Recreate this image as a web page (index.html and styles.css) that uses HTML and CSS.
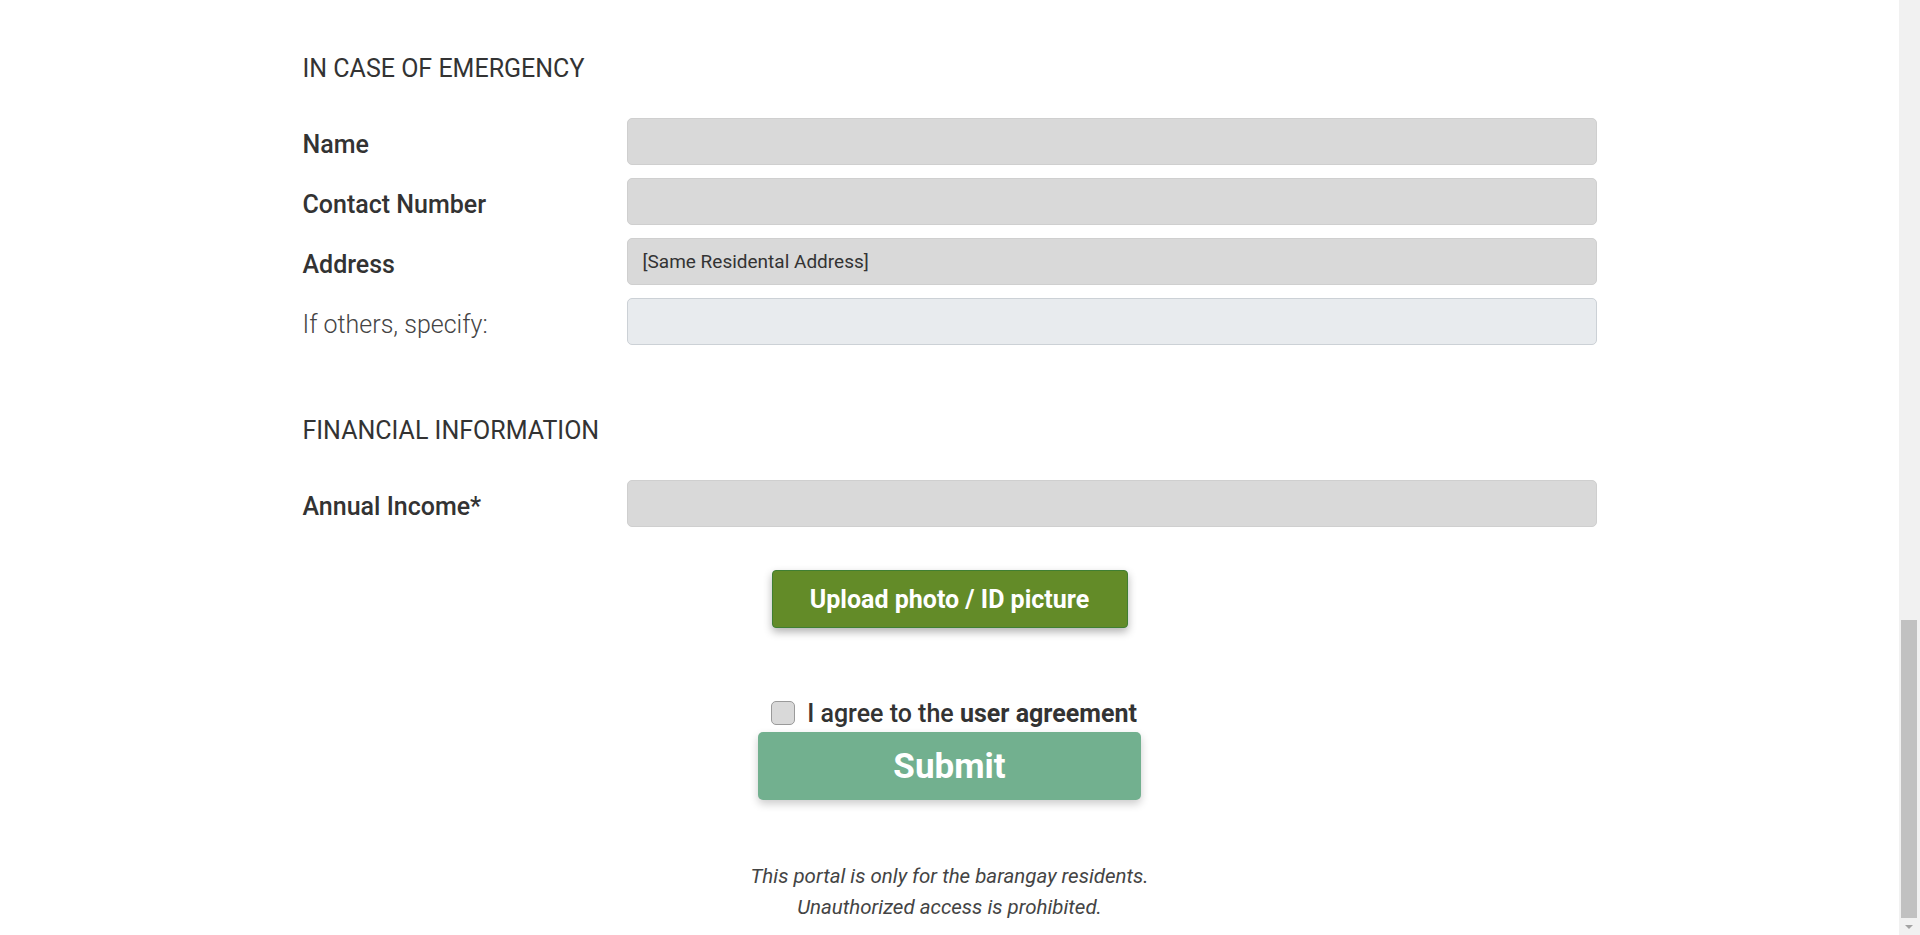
FILE: index.html
```html
<!DOCTYPE html>
<html lang="en">
<head>
  <meta charset="UTF-8">
  <meta name="viewport" content="width=device-width,initial-scale=1">
  <title>Barangay Portal - Registration</title>
  <link rel="stylesheet" href="styles.css">
</head>
<body>

  <div class="page">
    <main class="container">

      <!-- Contacto de emergencia -->
      <h2 class="section-title">IN CASE OF EMERGENCY</h2>
      <div class="form-grid">
        <label class="label">Name</label>
        <input class="field" type="text">

        <label class="label">Contact Number</label>
        <input class="field" type="text">

        <label class="label">Address</label>
        <input class="field" type="text" value="[Same Residental Address]">

        <label class="label light">If others, specify:</label>
        <input class="field disabled" type="text" disabled>
      </div>

      <!-- Finanzas -->
      <h2 class="section-title second">FINANCIAL INFORMATION</h2>
      <div class="form-grid">
        <label class="label">Annual Income*</label>
        <input class="field" type="text">
      </div>

      <div class="actions">
        <button class="btn-upload" type="button">Upload photo / ID picture</button>

        <label class="agree">
          <input type="checkbox" class="check">
          <span>I agree to the <b>user agreement</b></span>
        </label>
        <button class="btn-submit" type="submit">Submit</button>
      </div>

      <p class="note">This portal is only for the barangay residents.<br>Unauthorized access is prohibited.</p>
    </main>
  </div>

  <!-- barra de desplazamiento (página al final) -->
  <div class="scrollbar">
    <div class="thumb"></div>
    <div class="arrow"></div>
  </div>

</body>
</html>
```

FILE: styles.css
```css
*{margin:0;padding:0;box-sizing:border-box;}
html,body{
  height:100%;
  overflow:hidden;
  font-family:Roboto,"Liberation Sans",sans-serif;
  color:#333;
  background:#fff;
}
body{display:flex;}
.page{flex:1;height:935px;overflow:hidden;}
.container{width:1294px;margin:0 auto;padding-top:54px;}

.section-title{
  font-size:25px; line-height:30px;
  font-weight:400; color:#333;
  margin-bottom:34px;
}
.section-title.second{margin-top:71px;}

.form-grid{
  display:grid;
  grid-template-columns:324px 1fr;
  row-gap:13px; align-items:center;
}
.label{font-size:25px;font-weight:500;color:#333;line-height:30px;padding-top:6px;}
.label.light{font-weight:300;color:#444;}
.field{
  height:47px; width:100%;
  border:1px solid #cfcfcf; border-radius:5px;
  background:#d9d9d9; padding:0 15px;
  font-family:inherit; font-size:19px; color:#333;
  outline:none;
}
.field.disabled{background:#e8ebee;border-color:#ccd1d6;}

.actions{display:flex;flex-direction:column;align-items:center;}
.btn-upload{
  margin-top:43px; width:356px; height:58px;
  background:#638b28; color:#fff;
  border:1px solid #3f7f33; border-radius:4px;
  font-family:inherit; font-size:25px; font-weight:700;
  box-shadow:0 4px 8px rgba(0,0,0,0.3);
}
.agree{
  margin-top:73px; height:24px; padding-left:9px;
  display:flex; align-items:center; gap:12px;
  font-size:25px; font-weight:500; color:#333;
}
.agree b{font-weight:700;}
.check{
  appearance:none; -webkit-appearance:none;
  width:24px; height:24px; flex:none;
  background:#d9d9d9; border:1px solid #9a9a9a; border-radius:5px;
}
.btn-submit{
  margin-top:7px; width:383px; height:68px;
  background:#72b08f; color:#fff;
  border:none; border-radius:5px;
  font-family:inherit; font-size:35px; font-weight:700;
  box-shadow:0 4px 8px rgba(0,0,0,0.2);
}
.note{
  margin-top:61px; text-align:center;
  font-size:20.5px; line-height:31px;
  font-style:italic; color:#444;
}

/* Barra de scroll falsa */
.scrollbar{
  width:21px; height:935px; background:#f1f1f1;
  position:relative;
}
.thumb{
  position:absolute; left:2px; right:3px;
  top:620px; height:298px; background:#c1c1c1;
}
.arrow{
  position:absolute; left:6px; top:925px;
  border-left:4px solid transparent; border-right:4px solid transparent;
  border-top:4px solid #a3a3a3;
}
```
